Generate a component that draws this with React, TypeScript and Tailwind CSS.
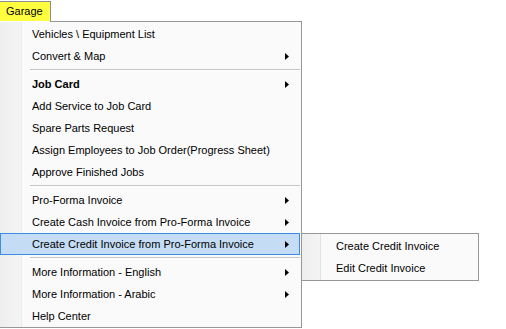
type Row =
  | { kind: 'item'; label: string; arrow?: boolean; bold?: boolean; active?: boolean }
  | { kind: 'sep' }

const rows: Row[] = [
  { kind: 'item', label: 'Vehicles \\ Equipment List' },
  { kind: 'item', label: 'Convert & Map', arrow: true },
  { kind: 'sep' },
  { kind: 'item', label: 'Job Card', arrow: true, bold: true },
  { kind: 'item', label: 'Add Service to Job Card' },
  { kind: 'item', label: 'Spare Parts Request' },
  { kind: 'item', label: 'Assign Employees to Job Order(Progress Sheet)' },
  { kind: 'item', label: 'Approve Finished Jobs' },
  { kind: 'sep' },
  { kind: 'item', label: 'Pro-Forma Invoice', arrow: true },
  { kind: 'item', label: 'Create Cash Invoice from Pro-Forma Invoice', arrow: true },
  { kind: 'item', label: 'Create Credit Invoice from Pro-Forma Invoice', arrow: true, active: true },
  { kind: 'sep' },
  { kind: 'item', label: 'More Information - English', arrow: true },
  { kind: 'item', label: 'More Information - Arabic', arrow: true },
  { kind: 'item', label: 'Help Center' },
]

const subItems = ['Create Credit Invoice', 'Edit Credit Invoice']

function Arrow() {
  return (
    <svg width="4" height="7" viewBox="0 0 4 7" className="block">
      <path d="M0 0 L4 3.5 L0 7 Z" fill="#000" />
    </svg>
  )
}

export default function App() {
  return (
    <div
      className="relative w-[506px] h-[329px] bg-white overflow-hidden text-[11px] text-black"
      style={{ fontFamily: '"Liberation Sans", Arial, sans-serif' }}
    >
      {/* menu bar */}
      <div className="h-[21px] flex">
        <div className="mt-px h-[20px] w-[51px] border-t border-r border-[#8e8e8e] bg-[#ffff40] flex items-center pl-[6px]">
          Garage
        </div>
      </div>

      {/* dropdown */}
      <div className="absolute left-0 top-[21px] w-[302px] h-[307px] flex flex-col">
        <div className="h-px ml-[50px] bg-[#979797]" />
        <div className="relative flex-1 flex flex-col pt-px border-r border-b border-[#979797] bg-[#fafafa] pr-px">
          <div className="absolute left-0 top-0 bottom-0 w-[22px] bg-gradient-to-r from-[#eeeeee] to-[#f4f4f4] border-r border-[#ececec]" />
          {rows.map((r, i) =>
            r.kind === 'sep' ? (
              <div key={i} className="relative h-[6px] flex flex-col justify-center pl-[30px]">
                <div className="h-px bg-[#c5c5c5]" />
                <div className="h-px bg-white" />
              </div>
            ) : (
              <div
                key={i}
                className={`relative h-[22px] flex items-center pl-[32px] pr-[10px] border ${
                  r.active ? 'bg-[#c4ddf5] border-[#3b8de4]' : 'border-transparent'
                }`}
              >
                <span className={`flex-1 -ml-px ${r.bold ? 'font-bold' : ''}`}>{r.label}</span>
                {r.arrow && <Arrow />}
              </div>
            )
          )}
        </div>
      </div>

      {/* submenu */}
      <div className="absolute left-[301px] top-[233px] w-[178px] h-[48px] border border-[#979797] bg-[#fafafa] py-px">
        <div className="absolute left-0 top-0 bottom-0 w-[19px] bg-gradient-to-r from-[#eeeeee] to-[#f4f4f4] border-r border-[#e2e2e2]" />
        {subItems.map((s) => (
          <div key={s} className="relative h-[22px] flex items-center pl-[34px]">
            {s}
          </div>
        ))}
      </div>
    </div>
  )
}
